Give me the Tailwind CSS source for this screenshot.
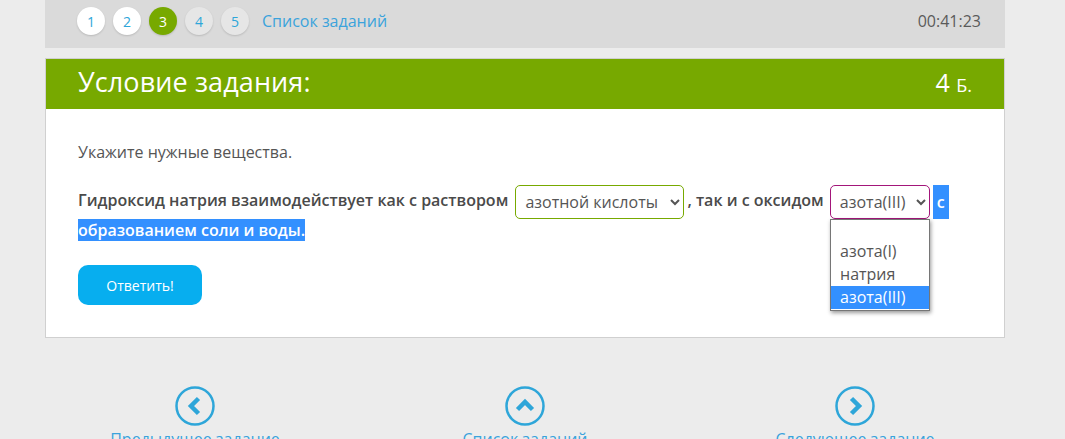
<!DOCTYPE html>
<html lang="ru">
<head>
<meta charset="utf-8">
<script src="https://cdn.jsdelivr.net/npm/@tailwindcss/browser@4"></script>
</head>
<body class="bg-[#ececec] font-['Open_Sans',sans-serif] text-[#555] h-[439px] overflow-hidden">
<div class="w-[960px] ml-[45px]">
  <div class="h-[48px] bg-[#dadada] flex items-start justify-between pl-[32px] pr-[24px]">
    <div class="flex items-center gap-[8px] h-[28px] mt-[7px]">
      <span class="w-[28px] h-[28px] rounded-full bg-white shadow-[0_1px_2px_rgba(0,0,0,0.15)] flex items-center justify-center text-[14px] text-[#2ea6d9]">1</span>
      <span class="w-[28px] h-[28px] rounded-full bg-white shadow-[0_1px_2px_rgba(0,0,0,0.15)] flex items-center justify-center text-[14px] text-[#2ea6d9]">2</span>
      <span class="w-[28px] h-[28px] rounded-full bg-[#77a900] shadow-[0_1px_2px_rgba(0,0,0,0.15)] flex items-center justify-center text-[14px] text-white">3</span>
      <span class="w-[28px] h-[28px] rounded-full bg-[#e6e6e6] shadow-[0_1px_2px_rgba(0,0,0,0.15)] flex items-center justify-center text-[14px] text-[#2ea6d9]">4</span>
      <span class="w-[28px] h-[28px] rounded-full bg-[#e6e6e6] shadow-[0_1px_2px_rgba(0,0,0,0.15)] flex items-center justify-center text-[14px] text-[#2ea6d9]">5</span>
      <a class="ml-[5px] text-[16px] text-[#3aa3dc]">Список заданий</a>
    </div>
    <div class="text-[16px] leading-[28px] mt-[7px] text-[#5a5a5a]">00:41:23</div>
  </div>

  <div class="mt-[10px] h-[280px] bg-white border border-[#d0d0d0] relative">
    <div class="h-[50px] bg-[#77a900] flex items-center justify-between pl-[32px] pr-[32px] pb-[3px] text-white">
      <div class="text-[27px] tracking-[0.1px]">Условие задания:</div>
      <div class="text-[25px]">4 <span class="text-[18px]">Б.</span></div>
    </div>
    <div class="pl-[32px] pr-[40px] pt-[32px]">
      <p class="text-[16px] leading-[22px]">Укажите нужные вещества.</p>
      <p class="mt-[22px] w-[874px] text-[16px] leading-[22px] font-semibold text-[#4a4a4a]">Гидроксид натрия взаимодействует как с раствором <select class="font-normal align-middle h-[34px] w-[169px] ml-[3px] border border-[#77a900] rounded-[5px] bg-white pl-[5px] text-[#555]"><option>азотной кислоты</option></select><span class="ml-[3px]">, так и с оксидом</span> <select class="font-normal align-middle h-[34px] w-[100px] ml-[2px] border border-[#a3167a] rounded-[5px] bg-white pl-[5px] text-[#555]"><option>азота(III)</option></select><span class="inline-block align-middle h-[34px] leading-[34px] px-[4px] ml-[3px] bg-[#3390ff] text-white">с</span> <span class="bg-[#3390ff] text-white">образованием соли и воды.</span></p>
      <button class="block mt-[24px] w-[124px] h-[40px] rounded-[10px] bg-[#07aeef] text-white text-[14px]">Ответить!</button>
    </div>
    <div class="absolute left-[784px] top-[160px] w-[100px] h-[92px] bg-white border border-[#767676] shadow-[1px_2px_4px_rgba(0,0,0,0.4)] text-[16px] leading-[23px] pt-[20px]">
      <div class="pl-[9px]">азота(I)</div>
      <div class="pl-[9px]">натрия</div>
      <div class="pl-[9px] bg-[#3390ff] text-white">азота(III)</div>
    </div>
  </div>

  <div class="grid grid-cols-3 w-[990px] -ml-[15px] mt-[48px] text-center text-[16px] leading-[22px] text-[#3aa3dc]">
    <a class="flex flex-col items-center gap-[2px]">
      <svg class="w-[40px] h-[40px]" viewBox="0 0 40 40" fill="none" stroke="#2ea6d9"><circle cx="20" cy="20" r="18.5" stroke-width="2.5"/><path d="M23.5 12.5L16 20l7.5 7.5" stroke-width="4.5"/></svg>
      <span>Предыдущее задание</span>
    </a>
    <a class="flex flex-col items-center gap-[2px]">
      <svg class="w-[40px] h-[40px]" viewBox="0 0 40 40" fill="none" stroke="#2ea6d9"><circle cx="20" cy="20" r="18.5" stroke-width="2.5"/><path d="M12.5 23.5L20 16l7.5 7.5" stroke-width="4.5"/></svg>
      <span>Список заданий</span>
    </a>
    <a class="flex flex-col items-center gap-[2px]">
      <svg class="w-[40px] h-[40px]" viewBox="0 0 40 40" fill="none" stroke="#2ea6d9"><circle cx="20" cy="20" r="18.5" stroke-width="2.5"/><path d="M16.5 12.5L24 20l-7.5 7.5" stroke-width="4.5"/></svg>
      <span>Следующее задание</span>
    </a>
  </div>
</div>
</body>
</html>
